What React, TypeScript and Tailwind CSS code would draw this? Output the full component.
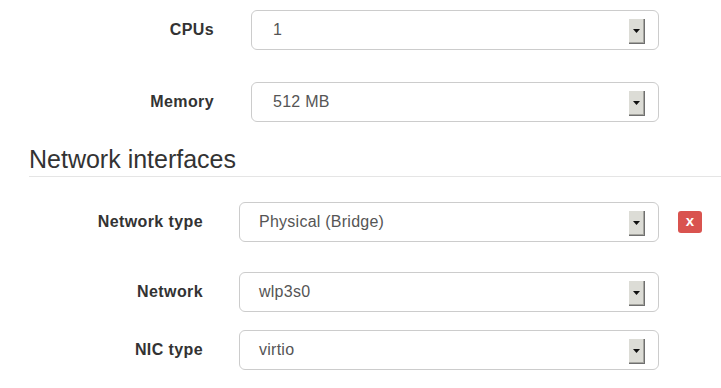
import React from "react";

type Field = {
  label: string;
  value: string;
};

const topFields: Field[] = [
  { label: "CPUs", value: "1" },
  { label: "Memory", value: "512 MB" },
];

function Arrow() {
  return (
    <div className="flex h-[25px] w-[16px] items-center justify-center border-t border-l border-t-white border-l-white bg-[#dcdcd6] shadow-[1px_1px_0_#6f6f6f,inset_-1px_-1px_0_#a6a6a0]">
      <svg width="7" height="4" viewBox="0 0 7 4">
        <path d="M0 0 H7 L3.5 4 Z" fill="#111" />
      </svg>
    </div>
  );
}

function Select({ value, width, pad }: { value: string; width: string; pad: string }) {
  return (
    <div
      className={`flex h-10 items-center justify-between rounded-[6px] border border-[#cccccc] bg-white pr-[14px] text-[16px] tracking-[0.25px] text-[#555] ${width} ${pad}`}
    >
      <span>{value}</span>
      <Arrow />
    </div>
  );
}

function App() {
  return (
    <div className="h-[388px] w-[721px] overflow-hidden bg-white font-['Liberation_Sans',Arial,sans-serif] text-[#333]">
      {/* compute settings */}
      <div className="flex flex-col gap-[32px] pt-[10px]">
        {topFields.map((f) => (
          <div key={f.label} className="flex items-center">
            <label className="w-[214px] text-right text-[16px] font-bold tracking-[0.4px]">{f.label}</label>
            <div className="ml-[37px]">
              <Select value={f.value} width="w-[408px]" pad="pl-[21px]" />
            </div>
          </div>
        ))}
      </div>

      {/* network */}
      <h3 className="ml-[29px] mt-[24px] border-b border-[#e5e5e5] pb-[4px] text-[25px] leading-[26px] font-normal">
        Network interfaces
      </h3>

      <div className="mt-[25px] flex items-center">
        <label className="w-[203px] text-right text-[16px] font-bold tracking-[0.4px]">Network type</label>
        <div className="ml-[36px]">
          <Select value="Physical (Bridge)" width="w-[420px]" pad="pl-[19px]" />
        </div>
        <button className="ml-[19px] flex h-[22px] w-[24px] items-center justify-center rounded-[3px] bg-[#d9534f] pb-[2px] text-[15px] font-bold text-white">
          x
        </button>
      </div>

      <div className="mt-[30px] flex items-center">
        <label className="w-[203px] text-right text-[16px] font-bold tracking-[0.4px]">Network</label>
        <div className="ml-[36px]">
          <Select value="wlp3s0" width="w-[420px]" pad="pl-[19px]" />
        </div>
      </div>

      <div className="mt-[18px] flex items-center">
        <label className="w-[203px] text-right text-[16px] font-bold tracking-[0.4px]">NIC type</label>
        <div className="ml-[36px]">
          <Select value="virtio" width="w-[420px]" pad="pl-[19px]" />
        </div>
      </div>
    </div>
  );
}

export default App;
